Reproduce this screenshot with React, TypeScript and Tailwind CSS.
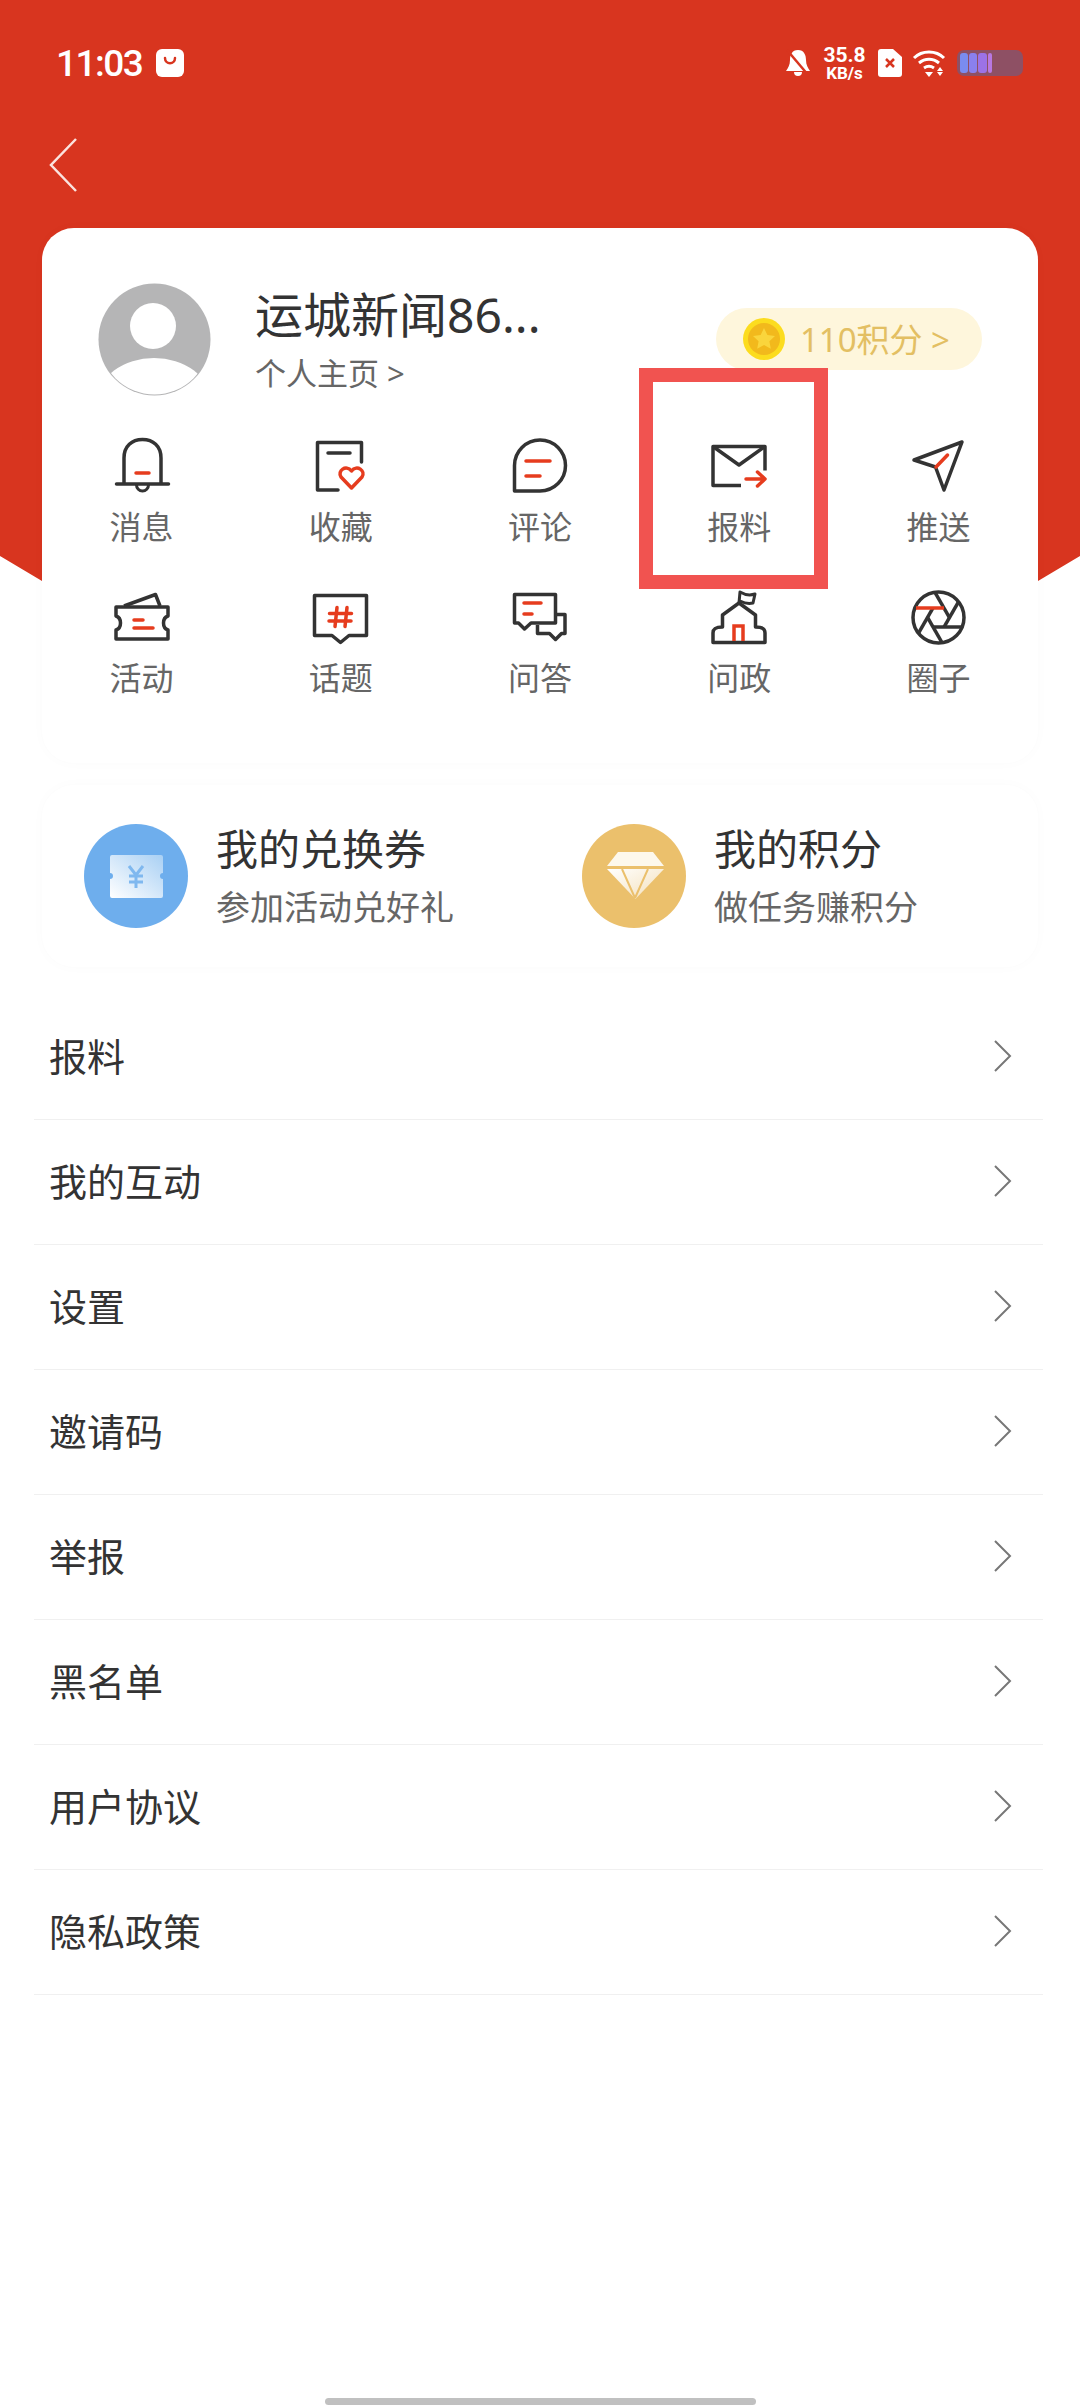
const cjk = "[font-family:'Noto_Sans','Noto_Sans_CJK_SC',sans-serif]";

const dark = "#333333";
const red = "#e63c1e";

const BellIcon = () => (
  <svg width="60" height="60" viewBox="0 0 60 60" fill="none">
    <path d="M12 48V22C12 10 20 3.5 30.5 3.5S49 10 49 22v26" stroke={dark} strokeWidth="3.5" />
    <path d="M4.5 48h52" stroke={dark} strokeWidth="3.5" strokeLinecap="round" />
    <path d="M24.5 49a6 6 0 0 0 12 0" stroke={dark} strokeWidth="3" />
    <path d="M24 37h13" stroke={red} strokeWidth="3.5" strokeLinecap="round" />
  </svg>
);

const FavIcon = () => (
  <svg width="60" height="60" viewBox="0 0 60 60" fill="none">
    <path d="M27 54H6.5V6.5h44V26" stroke={dark} strokeWidth="3.5" strokeLinejoin="round" strokeLinecap="round" />
    <path d="M17 17h22" stroke={dark} strokeWidth="3.5" strokeLinecap="round" />
    <path d="M40.5 52 30 41c-4-6 5-13 10.500-6 5.500-7 14.500 0 10.500 6z" stroke={red} strokeWidth="3.5" strokeLinejoin="round" />
  </svg>
);

const CommentIcon = () => (
  <svg width="60" height="60" viewBox="0 0 60 60" fill="none">
    <path d="M4.500 55V29.500A25.500 25.500 0 1 1 30 55z" stroke={dark} strokeWidth="3.5" strokeLinejoin="round" />
    <path d="M16 25h24M16 40h14" stroke={red} strokeWidth="3.5" strokeLinecap="round" />
  </svg>
);

const MailIcon = () => (
  <svg width="60" height="60" viewBox="0 0 60 60" fill="none">
    <path d="M32 49.500H4v-39h52v24" stroke={dark} strokeWidth="3.5" strokeLinejoin="round" />
    <path d="M4 10.500 30 29l26-18.500" stroke={dark} strokeWidth="3.5" strokeLinejoin="round" />
    <path d="M37 43h19M48.500 36l7.500 7-7.500 7" stroke={red} strokeWidth="3.5" strokeLinecap="round" strokeLinejoin="round" />
  </svg>
);

const SendIcon = () => (
  <svg width="60" height="60" viewBox="0 0 60 60" fill="none">
    <path d="M6 24 54 6 36 54 27.500 31z" stroke={dark} strokeWidth="3.5" strokeLinejoin="round" />
    <path d="M28 31l11.500-12" stroke={red} strokeWidth="3.5" strokeLinecap="round" />
  </svg>
);

const TicketIcon = () => (
  <svg width="60" height="60" viewBox="0 0 60 60" fill="none">
    <path d="M4 20h52v9c-6 2-6 12 0 14v9H4v-9c6-2 6-12 0-14z" stroke={dark} strokeWidth="3.5" strokeLinejoin="round" />
    <path d="M12 19 43.500 7.500 48 19" stroke={dark} strokeWidth="3.5" strokeLinejoin="round" />
    <path d="M22 33h9M22 41h19" stroke={red} strokeWidth="3.5" strokeLinecap="round" />
  </svg>
);

const TopicIcon = () => (
  <svg width="60" height="60" viewBox="0 0 60 60" fill="none">
    <path d="M3.500 8.500h52v40H38l-8.500 7-8.500-7H3.500z" stroke={dark} strokeWidth="3.500" strokeLinejoin="round" />
    <path d="M26 20.500l-2 19M36 20.500l-2 19M18.500 26.500h22M18 34h22" stroke={red} strokeWidth="3.500" strokeLinecap="round" />
  </svg>
);

const AnswerIcon = () => (
  <svg width="60" height="60" viewBox="0 0 60 60" fill="none">
    <path d="M4.500 7.500h41V36H21l-6.500 6-6-6h-4z" stroke={dark} strokeWidth="3.500" strokeLinejoin="round" />
    <path d="M46 27.500h9v19h-3.500l-6 6-6-6h-12V38" stroke={dark} strokeWidth="3.500" strokeLinejoin="round" />
    <path d="M14 16h17M14 27h8" stroke={red} strokeWidth="3.500" strokeLinecap="round" />
  </svg>
);

const GovIcon = () => (
  <svg width="60" height="60" viewBox="0 0 60 60" fill="none">
    <path d="M4 55.500V46c0-4 2-6 9.500-6V28L30 16l16.500 12v12c7.500 0 9.500 2 9.500 6v9.500z" stroke={dark} strokeWidth="3.500" strokeLinejoin="round" />
    <path d="M30 16 31 5c5 3 9 4 15 2l-2 9c-4 1-9 0-13-2" stroke={dark} strokeWidth="3" strokeLinejoin="round" />
    <path d="M25 54V39h9v15" stroke={red} strokeWidth="3.500" />
  </svg>
);

const CircleIcon = () => (
  <svg width="60" height="60" viewBox="0 0 60 60" fill="none">
    <circle cx="30.500" cy="30.500" r="25.500" stroke={dark} strokeWidth="3.500" />
    {[60, 120, 180, 240, 300].map((deg) => (
      <path key={deg} d="M7 21h29" stroke={dark} strokeWidth="3.500" transform={`rotate(${deg} 30.500 30.500)`} />
    ))}
    <path d="M8 21h28" stroke={red} strokeWidth="3.500" />
  </svg>
);

const Chevron = () => (
  <svg width="20" height="34" viewBox="0 0 20 34" fill="none">
    <path d="M2 2l15 15L2 32" stroke="#777777" strokeWidth="2" />
  </svg>
);

const grid = [
  { label: "消息", icon: <BellIcon /> },
  { label: "收藏", icon: <FavIcon /> },
  { label: "评论", icon: <CommentIcon /> },
  { label: "报料", icon: <MailIcon /> },
  { label: "推送", icon: <SendIcon /> },
  { label: "活动", icon: <TicketIcon /> },
  { label: "话题", icon: <TopicIcon /> },
  { label: "问答", icon: <AnswerIcon /> },
  { label: "问政", icon: <GovIcon /> },
  { label: "圈子", icon: <CircleIcon /> },
];

const rows = ["报料", "我的互动", "设置", "邀请码", "举报", "黑名单", "用户协议", "隐私政策"];

const StatusBar = () => (
  <div className="flex h-[125px] items-center justify-between pl-[56px] pr-[57px] pt-[1px] text-white">
    <div className="flex items-center gap-[14px]">
      <span className="[font-family:'Roboto',sans-serif] text-[37px] leading-none font-medium tracking-[-1.5px]">11:03</span>
      <svg width="28" height="28" viewBox="0 0 28 28">
        <rect width="28" height="28" rx="6" fill="#fff" />
        <path d="M9 9c0 7 10 7 10 0" stroke="#d8351f" strokeWidth="2.500" fill="none" strokeLinecap="round" />
      </svg>
    </div>
    <div className="flex items-center">
      <svg width="24" height="28" viewBox="0 0 24 28">
        <path d="M12 1C6 1 4 6 4 11c0 5-2 8-4 11h24c-2-3-4-6-4-11 0-5-2-10-8-10zM8 23a4 4 0 0 0 8 0z" fill="#fff" />
        <path d="M1 1l22 26" stroke="#d8351f" strokeWidth="2.500" />
      </svg>
      <div className="ml-[13px] flex w-[43px] flex-col items-center [font-family:'Roboto',sans-serif] font-bold">
        <span className="text-[21px] leading-[20px]">35.8</span>
        <span className="text-[17px] leading-[17px]">KB/s</span>
      </div>
      <svg className="ml-[12px]" width="24" height="28" viewBox="0 0 24 28">
        <path d="M3 0h12l9 8v17a3 3 0 0 1-3 3H3a3 3 0 0 1-3-3V3a3 3 0 0 1 3-3z" fill="#fff" />
        <path d="M8 10l8 8M16 10l-8 8" stroke="#d8351f" strokeWidth="2.500" />
      </svg>
      <svg className="ml-[10px]" width="34" height="28" viewBox="0 0 34 28" fill="none">
        <path d="M2 9c8-8 22-8 30 0M7 14c6-5 14-5 20 0M12 19c3-2 7-2 10 0" stroke="#fff" strokeWidth="3" />
        <path d="M13 23h8l-4 5z" fill="#fff" />
        <path d="M28 18l3 4h-6zM25 23h6l-3 4z" fill="#fff" />
      </svg>
      <div className="ml-[11px] flex h-[26px] w-[66px] items-center gap-[1px] rounded-[7px] bg-[#8e5064] px-[3px]">
        <span className="h-[20px] w-[8px] rounded-[3px] bg-[#7a8cf0]" />
        <span className="h-[20px] w-[8px] rounded-[3px] bg-[#8a80ee]" />
        <span className="h-[20px] w-[9px] rounded-[3px] bg-[#9c72e6]" />
        <span className="h-[20px] w-[4px] rounded-[2px] bg-[#b878e0]" />
      </div>
    </div>
  </div>
);

export default function App() {
  return (
    <div className={`relative h-[2408px] w-[1080px] overflow-hidden bg-white ${cjk}`}>
      {/* red header, its lower edge slopes away behind the card */}
      <div className="absolute inset-x-0 top-0 h-[600px] bg-[#d8351f] [clip-path:polygon(0_0,100%_0,100%_556px,1038px_581px,1038px_600px,42px_600px,42px_581px,0_556px)]" />

      <div className="relative">
        <StatusBar />
        <div className="flex h-[103px] items-start pl-[46px] pt-[11px]">
          <svg width="34" height="58" viewBox="0 0 34 58" fill="none">
            <path d="M30 3L5 29l25 26" stroke="#fbe3de" strokeWidth="2.500" />
          </svg>
        </div>

        {/* profile card */}
        <div className="mx-[42px] h-[535px] rounded-[32px] bg-white shadow-[0_0_14px_rgba(0,0,0,0.02)]">
          <div className="flex h-[208px] items-start pl-[56px] pr-[56px] pt-[55px]">
            <svg width="114" height="114" viewBox="0 0 114 114">
              <defs>
                <clipPath id="avatar">
                  <circle cx="56.500" cy="56.500" r="55" />
                </clipPath>
              </defs>
              <circle cx="56.500" cy="56.500" r="56" fill="#b5b5b6" />
              <circle cx="55" cy="43" r="23" fill="#fff" />
              <ellipse cx="56" cy="117" rx="56" ry="42" fill="#fff" clipPath="url(#avatar)" />
            </svg>
            <div className="ml-[43px] flex flex-col">
              <span className="mt-[2px] text-[48px] leading-[60px] text-[#333333]">运城新闻86...</span>
              <span className="mt-[8px] text-[31px] leading-[40px] text-[#666666]">个人主页 &gt;</span>
            </div>
            <div className="mt-[25px] ml-auto flex h-[62px] items-center rounded-full bg-[#fef6dc] pl-[27px] pr-[32px]">
              <svg width="42" height="42" viewBox="0 0 42 42">
                <circle cx="21" cy="21" r="21" fill="#fcdc1e" />
                <circle cx="21" cy="21" r="16" fill="#f2b91c" />
                <path d="M21 10l3.400 7 7.600 1-5.600 5.200 1.400 7.600-6.800-3.700-6.800 3.700 1.400-7.600L10 18l7.600-1z" fill="#fad53c" />
              </svg>
              <span className="ml-[15px] text-[33px] leading-none text-[#e3bf63]">110积分 &gt;</span>
            </div>
          </div>

          <div className="grid grid-cols-5 gap-y-[40px]">
            {grid.map((g) => (
              <div key={g.label} className="flex flex-col items-center">
                {g.icon}
                <span className="mt-[11px] text-[32px] leading-[40px] text-[#666666]">{g.label}</span>
              </div>
            ))}
          </div>
        </div>

        {/* coupon / points card */}
        <div className="mx-[42px] mt-[22px] flex h-[182px] items-center rounded-[32px] bg-white pl-[42px] shadow-[0_0_14px_rgba(0,0,0,0.02)]">
          <div className="flex w-[498px] items-center">
            <svg width="104" height="104" viewBox="0 0 104 104">
              <defs>
                <linearGradient id="ticket" x1="0" y1="1" x2="1" y2="0">
                  <stop offset="0" stopColor="#ffffff" />
                  <stop offset="1" stopColor="#a9d0f4" />
                </linearGradient>
              </defs>
              <circle cx="52" cy="52" r="52" fill="#6eaeed" />
              <path d="M28 31h49a2 2 0 0 1 2 2v16a3 3 0 0 0 0 6v17a2 2 0 0 1-2 2H28a2 2 0 0 1-2-2V55a3 3 0 0 0 0-6V33a2 2 0 0 1 2-2z" fill="url(#ticket)" />
              <path d="M45 42l7 9 7-9M52 51v13M45 52h14M45 58h14" stroke="#7fb8ef" strokeWidth="3" fill="none" />
            </svg>
            <div className="ml-[28px] flex flex-col">
              <span className="text-[42px] leading-[52px] text-[#333333]">我的兑换券</span>
              <span className="mt-[10px] text-[34px] leading-[44px] text-[#666666]">参加活动兑好礼</span>
            </div>
          </div>
          <div className="flex items-center">
            <svg width="104" height="104" viewBox="0 0 104 104">
              <defs>
                <linearGradient id="gem" x1="0" y1="0" x2="1" y2="1">
                  <stop offset="0" stopColor="#ffffff" />
                  <stop offset="1" stopColor="#f3dfb8" />
                </linearGradient>
              </defs>
              <circle cx="52" cy="52" r="52" fill="#ebc06c" />
              <path d="M36 28h35l11 14H25z" fill="#fdf8ec" />
              <path d="M25 45h57L53.500 75z" fill="url(#gem)" />
              <path d="M40 45l13 29M66 45 53 74" stroke="#ebc06c" strokeWidth="2" fill="none" />
            </svg>
            <div className="ml-[28px] flex flex-col">
              <span className="text-[42px] leading-[52px] text-[#333333]">我的积分</span>
              <span className="mt-[10px] text-[34px] leading-[44px] text-[#666666]">做任务赚积分</span>
            </div>
          </div>
        </div>

        {/* menu list */}
        <div className="mt-[28px] ml-[34px] w-[1009px]">
          {rows.map((r) => (
            <div key={r} className="flex h-[125px] items-center justify-between border-b border-[#f0f0f0] pb-[3px] pl-[15px] pr-[30px]">
              <span className="text-[38px] leading-none text-[#333333]">{r}</span>
              <Chevron />
            </div>
          ))}
        </div>
      </div>

      {/* annotation box, lies over the grid */}
      <div className="absolute top-[368px] left-[639px] h-[221px] w-[189px] border-[14px] border-[#f15350]" />

      {/* home indicator */}
      <div className="absolute bottom-[3px] left-[325px] h-[7px] w-[431px] rounded-full bg-[#c0c0c0]" />
    </div>
  );
}
